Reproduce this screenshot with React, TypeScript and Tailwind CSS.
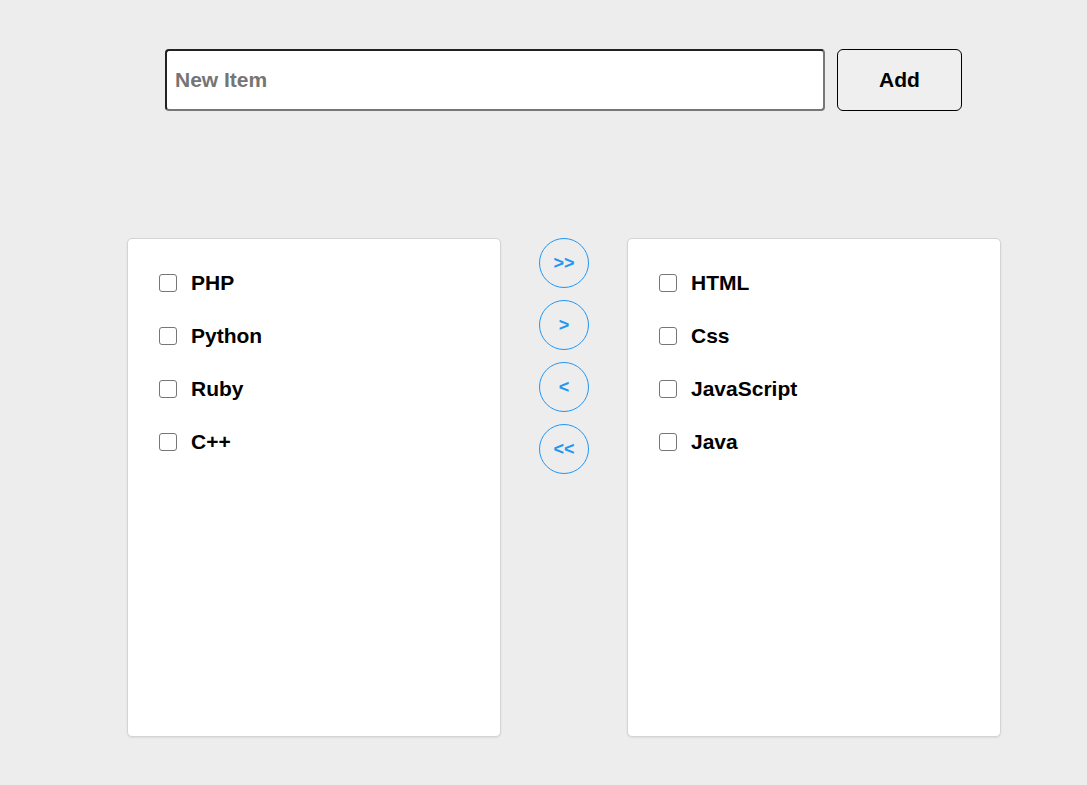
import { useState } from "react";

const font = { fontFamily: '"Liberation Sans", Arial, sans-serif' };

const Panel = ({ items }: { items: string[] }) => (
  <div className="w-[374px] h-[499px] bg-white border border-[#d4d4d4] rounded-[5px] shadow-[0_1px_2px_rgba(0,0,0,0.08)] pt-[17px] pl-[31px]">
    {items.map((item) => (
      <label key={item} className="flex items-center h-[53px] gap-[14px] cursor-pointer">
        <input
          type="checkbox"
          className="appearance-none w-[18px] h-[18px] border border-[#767676] rounded-[3px] bg-white shrink-0"
        />
        <span className="text-[21px] font-bold text-black leading-none">{item}</span>
      </label>
    ))}
  </div>
);

const MoveButton = ({ label }: { label: string }) => (
  <button className="w-[50px] h-[50px] rounded-full border border-[#2196f3] bg-transparent text-[#2196f3] text-[18px] font-bold flex items-center justify-center leading-none">
    {label}
  </button>
);

export default function App() {
  const [value, setValue] = useState("");

  return (
    <div className="min-h-screen bg-[#ededed]" style={font}>
      <div className="flex pt-[49px] pl-[165px] gap-[12px]">
        <input
          value={value}
          onChange={(e) => setValue(e.target.value)}
          placeholder="New Item"
          className="w-[660px] h-[62px] bg-white rounded-[4px] border-2 border-t-[#222] border-l-[#222] border-b-[#777] border-r-[#777] px-[8px] text-[21px] font-bold text-black placeholder:text-[#757575] outline-none"
        />
        <button className="w-[125px] h-[62px] bg-[#efefef] border border-black rounded-[6px] text-[21px] font-bold text-black">
          Add
        </button>
      </div>

      <div className="flex mt-[127px] pl-[127px] gap-[38px]">
        <Panel items={["PHP", "Python", "Ruby", "C++"]} />
        <div className="flex flex-col gap-[12px]">
          <MoveButton label=">>" />
          <MoveButton label=">" />
          <MoveButton label="<" />
          <MoveButton label="<<" />
        </div>
        <Panel items={["HTML", "Css", "JavaScript", "Java"]} />
      </div>
    </div>
  );
}
